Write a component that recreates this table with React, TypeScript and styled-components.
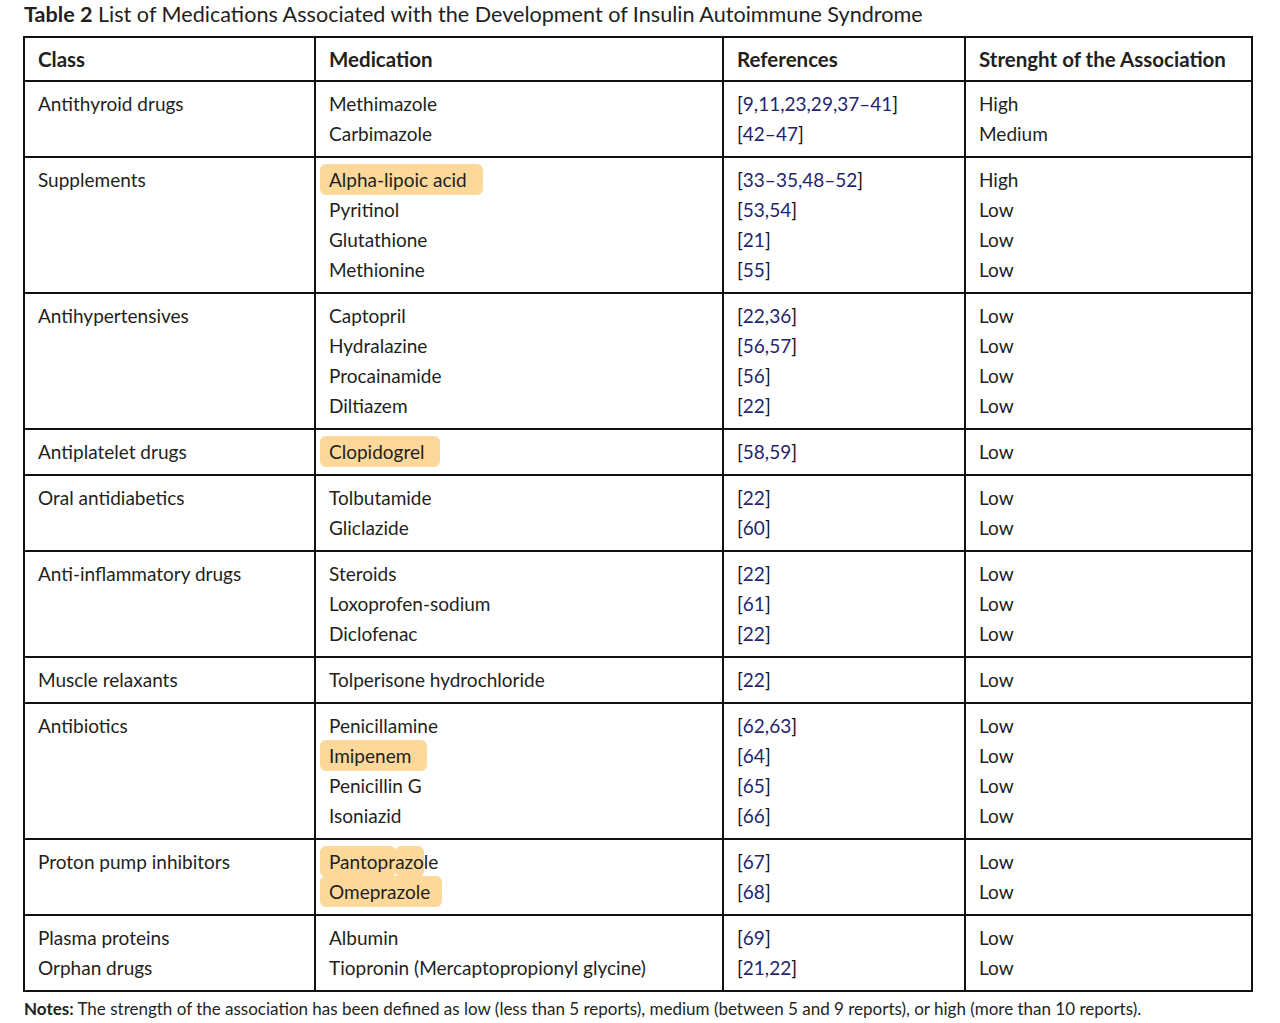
import { createGlobalStyle, styled } from "styled-components";
import React from "react";

const GlobalStyle = createGlobalStyle`
  body {
    margin: 0;
    background: #ffffff;
    color: #231f20;
    font-family: "Lato", "Open Sans", sans-serif;
  }
`;

const Page = styled.div`
  padding: 0 0 0 23px;
  width: 1230px;
`;

const Title = styled.div`
  font-size: 21.6px;
  line-height: 28px;
  margin: 0 0 8px 1px;
  b {
    font-weight: 700;
  }
`;

const Table = styled.table`
  border-collapse: collapse;
  width: 1229px;
  table-layout: fixed;
  border: 2px solid #111;
`;

const Col = styled.col<{ $w: number }>`
  width: ${(p) => p.$w}px;
`;

const Th = styled.th`
  height: 42px;
  padding: 0 13px;
  text-align: left;
  font-size: 20.5px;
  line-height: 24px;
  font-weight: 700;
  border: 2px solid #111;
  white-space: nowrap;
`;

const Td = styled.td`
  vertical-align: top;
  padding: 7px 13px;
  font-size: 19px;
  line-height: 30px;
  border: 2px solid #111;
`;

const Line = styled.div`
  white-space: nowrap;
`;

const Hl = styled.span<{ $l?: number; $r?: number }>`
  background: #fcd99b;
  border-radius: 6px;
  padding: 4px ${(p) => p.$r ?? 16}px 4px ${(p) => p.$l ?? 9}px;
  margin: 0 -${(p) => p.$r ?? 16}px 0 -${(p) => p.$l ?? 9}px;
`;

const Ref = styled.span`
  color: #111;
  span {
    color: #24246e;
  }
`;

const Notes = styled.div`
  font-size: 17px;
  line-height: 20px;
  margin: 7px 0 0 1px;
  b {
    font-weight: 700;
  }
`;

type Row = {
  cls: string[];
  meds: React.ReactNode[];
  refs: string[];
  str: string[];
};

const rows: Row[] = [
  {
    cls: ["Antithyroid drugs"],
    meds: ["Methimazole", "Carbimazole"],
    refs: ["9,11,23,29,37–41", "42–47"],
    str: ["High", "Medium"],
  },
  {
    cls: ["Supplements"],
    meds: [<Hl>Alpha-lipoic acid</Hl>, "Pyritinol", "Glutathione", "Methionine"],
    refs: ["33–35,48–52", "53,54", "21", "55"],
    str: ["High", "Low", "Low", "Low"],
  },
  {
    cls: ["Antihypertensives"],
    meds: ["Captopril", "Hydralazine", "Procainamide", "Diltiazem"],
    refs: ["22,36", "56,57", "56", "22"],
    str: ["Low", "Low", "Low", "Low"],
  },
  {
    cls: ["Antiplatelet drugs"],
    meds: [<Hl>Clopidogrel</Hl>],
    refs: ["58,59"],
    str: ["Low"],
  },
  {
    cls: ["Oral antidiabetics"],
    meds: ["Tolbutamide", "Gliclazide"],
    refs: ["22", "60"],
    str: ["Low", "Low"],
  },
  {
    cls: ["Anti-inflammatory drugs"],
    meds: ["Steroids", "Loxoprofen-sodium", "Diclofenac"],
    refs: ["22", "61", "22"],
    str: ["Low", "Low", "Low"],
  },
  {
    cls: ["Muscle relaxants"],
    meds: ["Tolperisone hydrochloride"],
    refs: ["22"],
    str: ["Low"],
  },
  {
    cls: ["Antibiotics"],
    meds: ["Penicillamine", <Hl>Imipenem</Hl>, "Penicillin G", "Isoniazid"],
    refs: ["62,63", "64", "65", "66"],
    str: ["Low", "Low", "Low", "Low"],
  },
  {
    cls: ["Proton pump inhibitors"],
    meds: [
      <>
        <Hl $r={1}>Pantopr</Hl>
        <Hl $l={0} $r={0}>azo</Hl>le
      </>,
      <Hl $r={12}>Omeprazole</Hl>,
    ],
    refs: ["67", "68"],
    str: ["Low", "Low"],
  },
  {
    cls: ["Plasma proteins", "Orphan drugs"],
    meds: ["Albumin", "Tiopronin (Mercaptopropionyl glycine)"],
    refs: ["69", "21,22"],
    str: ["Low", "Low"],
  },
];

export default function App() {
  return (
    <Page>
      <GlobalStyle />
      <Title>
        <b>Table 2</b> List of Medications Associated with the Development of
        Insulin Autoimmune Syndrome
      </Title>
      <Table>
        <colgroup>
          <Col $w={291} />
          <Col $w={408} />
          <Col $w={242} />
          <Col $w={287} />
        </colgroup>
        <thead>
          <tr>
            <Th>Class</Th>
            <Th>Medication</Th>
            <Th>References</Th>
            <Th>Strenght of the Association</Th>
          </tr>
        </thead>
        <tbody>
          {rows.map((r, i) => (
            <tr key={i}>
              <Td>
                {r.cls.map((c) => (
                  <Line key={c}>{c}</Line>
                ))}
              </Td>
              <Td>
                {r.meds.map((m, j) => (
                  <Line key={j}>{m}</Line>
                ))}
              </Td>
              <Td>
                {r.refs.map((ref, j) => (
                  <Line key={j}>
                    <Ref>
                      [<span>{ref}</span>]
                    </Ref>
                  </Line>
                ))}
              </Td>
              <Td>
                {r.str.map((s, j) => (
                  <Line key={j}>{s}</Line>
                ))}
              </Td>
            </tr>
          ))}
        </tbody>
      </Table>
      <Notes>
        <b>Notes:</b> The strength of the association has been defined as low
        (less than 5 reports), medium (between 5 and 9 reports), or high (more
        than 10 reports).
      </Notes>
    </Page>
  );
}
